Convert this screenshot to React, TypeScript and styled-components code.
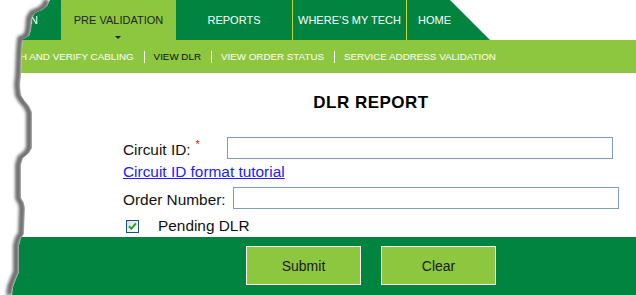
import styled, { createGlobalStyle } from "styled-components";

const GlobalStyle = createGlobalStyle`
  html,
  body {
    margin: 0;
    padding: 0;
    background: #ffffff;
  }

  body {
    font-family: "Liberation Sans", Arial, sans-serif;
  }
`;

// outline of the torn left side of the capture, as x at each y
const tornEdge: [number, number][] = [
  [50, 0],
  [47, 6],
  [42, 10],
  [35, 13],
  [32, 18],
  [31, 30],
  [29, 36],
  [23, 39],
  [22, 50],
  [21, 75],
  [20, 85],
  [21, 95],
  [24, 100],
  [29, 106],
  [32, 112],
  [32, 148],
  [29, 153],
  [23, 158],
  [21, 165],
  [21, 198],
  [24, 203],
  [25, 208],
  [24, 234],
  [21, 238],
  [19, 245],
  [19, 272],
  [16, 279],
  [13, 287],
  [12, 295],
];

const navTabs = [
  { label: "N", width: 61, lead: true },
  { label: "PRE VALIDATION", width: 115, active: true },
  { label: "REPORTS", width: 116 },
  { label: "WHERE\u2019S MY TECH", width: 114, divider: true },
  { label: "HOME", width: 84, divider: true, last: true },
];

const subLinks = [
  "H AND VERIFY CABLING",
  "VIEW DLR",
  "VIEW ORDER STATUS",
  "SERVICE ADDRESS VALIDATION",
];

function TornEdge() {
  const edgePoints = tornEdge.map(([x, y]) => `${x},${y}`).join(" ");
  const shadowPoints = tornEdge.map(([x, y]) => `${x - 3},${y}`).join(" ");
  const paper = `0,0 ${edgePoints} 0,295`;

  return (
    <EdgeOverlay width="60" height="295" viewBox="0 0 60 295">
      <defs>
        <clipPath id="paper-clip">
          <polygon points={paper} />
        </clipPath>
        <filter id="paper-blur" x="-50%" y="-10%" width="200%" height="120%">
          <feGaussianBlur stdDeviation="1.5" />
        </filter>
      </defs>
      <polygon points={paper} fill="#ffffff" />
      <g clipPath="url(#paper-clip)">
        <polyline
          points={shadowPoints}
          fill="none"
          stroke="#6e6e6e"
          strokeWidth="6"
          filter="url(#paper-blur)"
        />
      </g>
    </EdgeOverlay>
  );
}

export default function App() {
  return (
    <>
      <GlobalStyle />
      <Page>
        <TopNav>
          <Tabs>
            {navTabs.map((tab) => (
              <Tab
                key={tab.label}
                $width={tab.width}
                $active={tab.active}
                $divider={tab.divider}
                $lead={tab.lead}
                $last={tab.last}>
                {tab.label}
                {tab.active && <Caret />}
              </Tab>
            ))}
          </Tabs>
        </TopNav>
        <SubNav>
          {subLinks.map((link, i) => (
            <SubItem key={link}>
              {i > 0 && <SubDivider />}
              <SubLink $current={link === "VIEW DLR"}>{link}</SubLink>
            </SubItem>
          ))}
        </SubNav>
        <Main>
          <Title>DLR REPORT</Title>
          <Form>
            <FieldRow>
              <Label>Circuit ID:</Label>
              <Required>*</Required>
              <TextInput $offset={27} />
            </FieldRow>
            <TutorialLink href="#">Circuit ID format tutorial</TutorialLink>
            <FieldRow $spaced>
              <Label>Order Number:</Label>
              <TextInput $offset={7} />
            </FieldRow>
            <CheckRow>
              <CheckBox>
                <svg width="9" height="8" viewBox="0 0 9 8">
                  <path
                    d="M1 4.2 L3.4 6.6 L8 1.4"
                    fill="none"
                    stroke="#23a12a"
                    strokeWidth="2"
                  />
                </svg>
              </CheckBox>
              <CheckLabel>Pending DLR</CheckLabel>
            </CheckRow>
          </Form>
        </Main>
        <Footer>
          <ActionButton>Submit</ActionButton>
          <ActionButton>Clear</ActionButton>
        </Footer>
        <TornEdge />
      </Page>
    </>
  );
}

const Page = styled.div`
  position: relative;
  width: 636px;
  height: 295px;
  overflow: hidden;
  display: flex;
  flex-direction: column;
  background: #ffffff;
`;

const EdgeOverlay = styled.svg`
  position: absolute;
  left: 0;
  top: 0;
  pointer-events: none;
`;

const TopNav = styled.div`
  display: flex;
  height: 40px;
  background: #ffffff;
`;

const Tabs = styled.div`
  display: flex;
  width: 490px;
  height: 100%;
  background: #00843f;
  clip-path: polygon(0 0, 450px 0, 490px 100%, 0 100%);
`;

const Tab = styled.div<{
  $width: number;
  $active?: boolean;
  $divider?: boolean;
  $lead?: boolean;
  $last?: boolean;
}>`
  position: relative;
  box-sizing: border-box;
  width: ${(p) => p.$width}px;
  height: 100%;
  display: flex;
  align-items: center;
  justify-content: ${(p) => (p.$lead ? "flex-end" : p.$last ? "flex-start" : "center")};
  padding: ${(p) => (p.$lead ? "0 23px 0 0" : p.$last ? "0 0 0 11px" : "0")};
  border-left: ${(p) => (p.$divider ? "1px solid #c9d42e" : "none")};
  background: ${(p) => (p.$active ? "#8dc63f" : "transparent")};
  color: ${(p) => (p.$active ? "#1f1f1f" : "#ffffff")};
  font-size: 11px;
  white-space: nowrap;
`;

const Caret = styled.span`
  position: absolute;
  left: 54px;
  bottom: 1px;
  width: 0;
  height: 0;
  border-left: 3px solid transparent;
  border-right: 3px solid transparent;
  border-top: 3px solid #1f1f1f;
`;

const SubNav = styled.div`
  display: flex;
  align-items: center;
  height: 33px;
  padding-left: 20px;
  background: #8dc63f;
`;

const SubItem = styled.div`
  display: flex;
  align-items: center;
`;

const SubDivider = styled.span`
  width: 1px;
  height: 12px;
  margin: 0 9px 0 10px;
  background: #ffffff;
`;

const SubLink = styled.span<{ $current?: boolean }>`
  font-size: 9.8px;
  color: ${(p) => (p.$current ? "#111111" : "#ffffff")};
  white-space: nowrap;
`;

const Main = styled.div`
  height: 164px;
  padding-left: 106px;
  box-sizing: border-box;
  background: #ffffff;
`;

const Title = styled.div`
  margin-top: 20px;
  text-align: center;
  font-size: 17px;
  line-height: 20px;
  font-weight: bold;
  letter-spacing: 0.5px;
  color: #000000;
`;

const Form = styled.div`
  width: 496px;
  margin: 24px auto 0;
  display: flex;
  flex-direction: column;
  align-items: flex-start;
`;

const FieldRow = styled.div<{ $spaced?: boolean }>`
  display: flex;
  align-items: flex-start;
  margin-top: ${(p) => (p.$spaced ? "6px" : "0")};
`;

const Label = styled.span`
  margin-top: 4px;
  font-size: 15.4px;
  line-height: 18px;
  color: #111111;
  white-space: nowrap;
`;

const Required = styled.span`
  margin: 2px 0 0 5px;
  font-size: 11px;
  line-height: 11px;
  color: #e8141b;
`;

const TextInput = styled.div<{ $offset: number }>`
  box-sizing: border-box;
  width: 386px;
  height: 22px;
  margin-left: ${(p) => p.$offset}px;
  border: 1px solid #7f9db9;
  background: #ffffff;
`;

const TutorialLink = styled.a`
  margin-top: 4px;
  font-size: 15.4px;
  line-height: 18px;
  color: #2020ff;
  text-decoration: underline;
`;

const CheckRow = styled.div`
  display: flex;
  align-items: center;
  margin-top: 8px;
  padding-left: 3px;
`;

const CheckBox = styled.span`
  box-sizing: border-box;
  width: 13px;
  height: 13px;
  display: flex;
  align-items: center;
  justify-content: center;
  border: 1px solid #1c5180;
  background: linear-gradient(135deg, #dcdcd7, #ffffff);
`;

const CheckLabel = styled.span`
  margin-left: 19px;
  font-size: 15.4px;
  line-height: 18px;
  color: #111111;
`;

const Footer = styled.div`
  flex: 1;
  display: flex;
  justify-content: center;
  align-items: flex-start;
  gap: 20px;
  padding: 9px 0 0 106px;
  background: #00843f;
`;

const ActionButton = styled.button`
  box-sizing: border-box;
  width: 115px;
  height: 39px;
  border: 1px solid #ffffff;
  background: #8dc63f;
  font-family: "Liberation Sans", Arial, sans-serif;
  font-size: 14px;
  color: #1a1a1a;
  cursor: pointer;
`;
